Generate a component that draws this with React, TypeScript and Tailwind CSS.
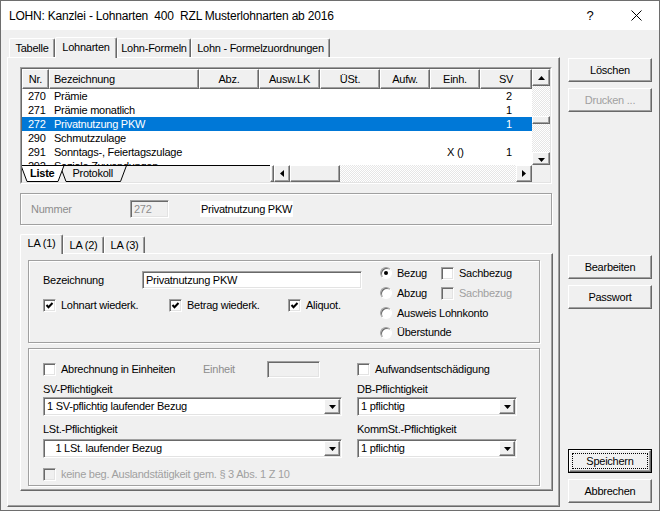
import React from 'react';

const raised =
  'border border-t-white border-l-white border-r-[#696969] border-b-[#696969] shadow-[inset_-1px_-1px_0_#a0a0a0]';
const sunkenBox =
  'border border-t-[#a0a0a0] border-l-[#a0a0a0] border-r-white border-b-white shadow-[inset_1px_1px_0_#696969,inset_-1px_-1px_0_#e3e3e3]';
const etched = 'border border-[#a0a0a0] shadow-[inset_1px_1px_0_#fff,1px_1px_0_#fff]';

const Check = ({ checked, disabled, label, className = '' }: { checked?: boolean; disabled?: boolean; label: string; className?: string }) => (
  <div className={`flex items-center ${className}`}>
    <span className={`w-[13px] h-[13px] shrink-0 flex items-center justify-center ${sunkenBox} ${disabled ? 'bg-[#f0f0f0]' : 'bg-white'}`}>
      {checked && (
        <svg width="9" height="9" viewBox="0 0 9 9">
          <polyline points="1.5,4 3.5,6.2 7.5,2" fill="none" stroke="#000" strokeWidth="2" />
        </svg>
      )}
    </span>
    <span className={`ml-[5px] whitespace-nowrap ${disabled ? 'text-[#a0a0a0]' : ''}`}>{label}</span>
  </div>
);

const Radio = ({ checked, label, className = '' }: { checked?: boolean; label: string; className?: string }) => (
  <div className={`flex items-center ${className}`}>
    <span className="w-[12px] h-[12px] shrink-0 rounded-full bg-white border border-t-[#a0a0a0] border-l-[#a0a0a0] border-r-white border-b-white shadow-[inset_1px_1px_0_#696969] flex items-center justify-center">
      {checked && <span className="w-[4px] h-[4px] rounded-full bg-black" />}
    </span>
    <span className="ml-[5px] whitespace-nowrap">{label}</span>
  </div>
);

const Arrow = ({ dir }: { dir: 'up' | 'down' | 'left' | 'right' }) => {
  const d = {
    up: 'M0 4H7L3.5 0Z',
    down: 'M0 0H7L3.5 4Z',
    left: 'M4 0V7L0 3.5Z',
    right: 'M0 0V7L4 3.5Z',
  }[dir];
  const horiz = dir === 'up' || dir === 'down';
  return (
    <svg width={horiz ? 7 : 4} height={horiz ? 4 : 7} viewBox={horiz ? '0 0 7 4' : '0 0 4 7'}>
      <path d={d} fill="#000" />
    </svg>
  );
};

const Combo = ({ value, className = '' }: { value: string; className?: string }) => (
  <div className={`h-[19px] flex items-center bg-white ${sunkenBox} ${className}`}>
    <span className="flex-1 pl-[3px] whitespace-pre">{value}</span>
    <span className={`w-[16px] h-[15px] mr-[1px] bg-[#f0f0f0] flex items-center justify-center ${raised}`}>
      <Arrow dir="down" />
    </span>
  </div>
);

const Button = ({ label, disabled, isDefault, className = '' }: { label: string; disabled?: boolean; isDefault?: boolean; className?: string }) =>
  isDefault ? (
    <div className={`h-[24px] border border-black ${className}`}>
      <div className={`h-full p-[2px] ${raised}`}>
        <div className="h-full flex items-center justify-center border border-dotted border-black">{label}</div>
      </div>
    </div>
  ) : (
    <div className={`h-[24px] flex items-center justify-center ${raised} ${disabled ? 'text-[#a0a0a0]' : ''} ${className}`}>
      {label}
    </div>
  );

const Tab = ({ label, active, className = '' }: { label: string; active?: boolean; className?: string }) => (
  <div
    className={`flex items-center justify-center rounded-t-[2px] border-t border-l border-white border-r border-r-[#696969] shadow-[inset_-1px_0_0_#a0a0a0] ${
      active ? 'h-[21px] -mb-px bg-[#f0f0f0] relative z-10 pb-[2px]' : 'h-[19px]'
    } ${className}`}
  >
    {label}
  </div>
);

const cols = [
  { label: 'Nr.', w: 'w-[27px]' },
  { label: 'Bezeichnung', w: 'w-[150px]', left: true },
  { label: 'Abz.', w: 'w-[60px]' },
  { label: 'Ausw.LK', w: 'w-[61px]' },
  { label: 'ÜSt.', w: 'w-[60px]' },
  { label: 'Aufw.', w: 'w-[50px]' },
  { label: 'Einh.', w: 'w-[50px]' },
  { label: 'SV', w: 'w-[52px]' },
];

const rows = [
  { nr: '270', name: 'Prämie', einh: '', sv: '2' },
  { nr: '271', name: 'Prämie monatlich', einh: '', sv: '1' },
  { nr: '272', name: 'Privatnutzung PKW', einh: '', sv: '1', selected: true },
  { nr: '290', name: 'Schmutzzulage', einh: '', sv: '' },
  { nr: '291', name: 'Sonntags-, Feiertagszulage', einh: 'X ()', sv: '1' },
  { nr: '292', name: 'Soziale Zuwendungen', einh: '', sv: '' },
];

const track = 'bg-[repeating-conic-gradient(#ffffff_0_25%,#e6e6e6_0_50%)] bg-size-[2px_2px]';

const ListView = () => (
  <div className="w-[532px] h-[117px] border border-t-[#a0a0a0] border-l-[#a0a0a0] border-r-white border-b-white">
    <div className="h-full flex flex-col border border-t-[#696969] border-l-[#696969] border-r-[#e3e3e3] border-b-[#e3e3e3] bg-white">
      <div className="h-[96px] flex">
        <div className="w-[510px] overflow-hidden">
          <div className="h-[20px] flex bg-[#f0f0f0]">
            {cols.map((c) => (
              <div
                key={c.label}
                className={`${c.w} h-full flex items-center ${c.left ? 'pl-[4px]' : 'justify-center'} ${raised}`}
              >
                {c.label}
              </div>
            ))}
          </div>
          {rows.map((r) => (
            <div key={r.nr} className={`h-[14px] flex items-center ${r.selected ? 'bg-[#0078d7] text-white' : ''}`}>
              <span className="w-[27px] pl-[6px]">{r.nr}</span>
              <span className="w-[150px] pl-[5px] whitespace-nowrap">{r.name}</span>
              <span className="w-[231px]" />
              <span className="w-[50px] pl-[17px]">{r.einh}</span>
              <span className="w-[52px] pl-[26px]">{r.sv}</span>
            </div>
          ))}
        </div>
        <div className={`w-[18px] flex flex-col ${track}`}>
          <div className={`h-[17px] bg-[#f0f0f0] flex items-center justify-center ${raised}`}>
            <Arrow dir="up" />
          </div>
          <div className="h-[30px]" />
          <div className={`h-[8px] bg-[#f0f0f0] ${raised}`} />
          <div className="h-[28px]" />
          <div className={`h-[13px] bg-[#f0f0f0] flex items-end justify-center pb-[2px] ${raised}`}>
            <Arrow dir="down" />
          </div>
        </div>
      </div>
      <div className="h-[17px] flex bg-[#f0f0f0]">
        <div className="w-[248px] h-full relative">
          <svg className="absolute inset-0" width="248" height="17" viewBox="0 0 248 17">
            <polygon points="38,0.5 44,16.5 98.5,16.5 104.5,0.5" fill="#f0f0f0" stroke="#000" strokeWidth="1" />
            <polygon points="-1,0.5 5,16.5 36,16.5 42,0.5" fill="#fff" stroke="#000" strokeWidth="1" />
            <line x1="42" y1="0.5" x2="248" y2="0.5" stroke="#000" strokeWidth="1" />
          </svg>
          <div className="relative flex items-center h-full">
            <span className="ml-[8px] font-bold">Liste</span>
            <span className="ml-[18px]">Protokoll</span>
          </div>
        </div>
        <div className={`w-[4px] h-full ${raised}`} />
        <div className={`w-[258px] h-full flex ${track}`}>
          <div className={`w-[16px] bg-[#f0f0f0] flex items-center justify-center ${raised}`}>
            <Arrow dir="left" />
          </div>
          <div className={`w-[50px] bg-[#f0f0f0] ${raised}`} />
          <div className="flex-1" />
          <div className={`w-[16px] bg-[#f0f0f0] flex items-center justify-center ${raised}`}>
            <Arrow dir="right" />
          </div>
        </div>
        <div className="w-[18px] bg-[#f0f0f0]" />
      </div>
    </div>
  </div>
);

export default function App() {
  return (
    <div className="w-[660px] h-[511px] bg-[#f0f0f0] border border-[#6e6e6e] text-[11px] tracking-[-0.25px] text-black font-['Liberation_Sans',Arial,sans-serif] overflow-hidden">
      <div className="h-[29px] bg-white flex items-center">
        <span className="pl-[8px] text-[12px] tracking-[-0.2px] whitespace-pre">
          LOHN: Kanzlei - Lohnarten  400  RZL Musterlohnarten ab 2016
        </span>
        <span className="flex-1" />
        <span className="w-[46px] text-center text-[13px]">?</span>
        <span className="w-[46px] flex justify-center">
          <svg width="11" height="11" viewBox="0 0 11 11">
            <path d="M0.5 0.5L10.5 10.5M10.5 0.5L0.5 10.5" stroke="#000" strokeWidth="1" />
          </svg>
        </span>
      </div>

      <div className="flex">
        <div className="ml-[6px] mt-[6px]">
          <div className="h-[21px] flex items-end pl-[2px] relative z-10">
            <Tab label="Tabelle" className="w-[46px]" />
            <Tab label="Lohnarten" active className="w-[62px]" />
            <Tab label="Lohn-Formeln" className="w-[74px]" />
            <Tab label="Lohn - Formelzuordnungen" className="w-[139px]" />
          </div>
          <div className={`w-[553px] h-[450px] pl-[12px] pt-[9px] ${raised}`}>
            <ListView />

            <div className={`mt-[9px] w-[532px] h-[32px] flex items-center pl-[10px] ${etched}`}>
              <span className="w-[99px] text-[#8d8d8d]">Nummer</span>
              <span className={`w-[39px] h-[18px] flex items-center pl-[3px] text-[#8d8d8d] ${sunkenBox}`}>272</span>
              <span className="ml-[31px] bg-white px-px">Privatnutzung PKW</span>
            </div>

            <div className="mt-[9px] h-[19px] flex items-end relative z-10">
              <Tab label="LA (1)" active className="w-[43px] !h-[20px]" />
              <Tab label="LA (2)" className="w-[41px] !h-[17px]" />
              <Tab label="LA (3)" className="w-[41px] !h-[17px]" />
            </div>
            <div className={`w-[533px] h-[238px] pl-[7px] pt-[6px] ${raised}`}>
              <div className={`w-[512px] h-[83px] flex ${etched}`}>
                <div className="w-[351px] pl-[14px] pt-[10px]">
                  <div className="h-[18px] flex items-center">
                    <span className="w-[99px]">Bezeichnung</span>
                    <span className={`w-[220px] h-[18px] flex items-center pl-[3px] bg-white ${sunkenBox}`}>
                      Privatnutzung PKW
                    </span>
                  </div>
                  <div className="mt-[10px] h-[13px] flex items-center">
                    <Check checked label="Lohnart wiederk." className="w-[126px]" />
                    <Check checked label="Betrag wiederk." className="w-[119px]" />
                    <Check checked label="Aliquot." />
                  </div>
                </div>
                <div className="pt-[2px]">
                  <div className="h-[20px] flex items-center">
                    <Radio checked label="Bezug" className="w-[61px]" />
                    <Check label="Sachbezug" />
                  </div>
                  <div className="h-[20px] flex items-center">
                    <Radio label="Abzug" className="w-[61px]" />
                    <Check disabled label="Sachbezug" />
                  </div>
                  <div className="h-[20px] flex items-center">
                    <Radio label="Ausweis Lohnkonto" />
                  </div>
                  <div className="h-[19px] flex items-center">
                    <Radio label="Überstunde" />
                  </div>
                </div>
              </div>

              <div className={`mt-[5px] w-[512px] h-[138px] pl-[14px] pt-[12px] ${etched}`}>
                <div className="h-[17px] flex items-center">
                  <div className="w-[314px] flex items-center">
                    <Check label="Abrechnung in Einheiten" className="w-[160px]" />
                    <span className="w-[64px] text-[#8d8d8d]">Einheit</span>
                    <span className={`w-[53px] h-[17px] ${sunkenBox}`} />
                  </div>
                  <Check label="Aufwandsentschädigung" />
                </div>
                <div className="mt-[5px] h-[13px] flex items-center">
                  <span className="w-[314px]">SV-Pflichtigkeit</span>
                  <span>DB-Pflichtigkeit</span>
                </div>
                <div className="mt-px flex">
                  <div className="w-[314px]">
                    <Combo value="1 SV-pflichtig laufender Bezug" className="w-[299px]" />
                  </div>
                  <Combo value="1 pflichtig" className="w-[160px]" />
                </div>
                <div className="mt-[7px] h-[13px] flex items-center">
                  <span className="w-[314px]">LSt.-Pflichtigkeit</span>
                  <span>KommSt.-Pflichtigkeit</span>
                </div>
                <div className="mt-[3px] flex">
                  <div className="w-[314px]">
                    <Combo value="   1 LSt. laufender Bezug" className="w-[299px]" />
                  </div>
                  <Combo value="1 pflichtig" className="w-[160px]" />
                </div>
                <div className="mt-[10px] h-[13px] flex items-center">
                  <Check disabled label="keine beg. Auslandstätigkeit gem. § 3 Abs. 1 Z 10" />
                </div>
              </div>
            </div>
          </div>
        </div>

        <div className="ml-[8px] mt-[28px] w-[84px] flex flex-col">
          <Button label="Löschen" />
          <Button label="Drucken ..." disabled className="mt-[6px]" />
          <Button label="Bearbeiten" className="mt-[143px]" />
          <Button label="Passwort" className="mt-[6px]" />
          <Button label="Speichern" isDefault className="mt-[140px]" />
          <Button label="Abbrechen" className="mt-[6px]" />
        </div>
      </div>
    </div>
  );
}
